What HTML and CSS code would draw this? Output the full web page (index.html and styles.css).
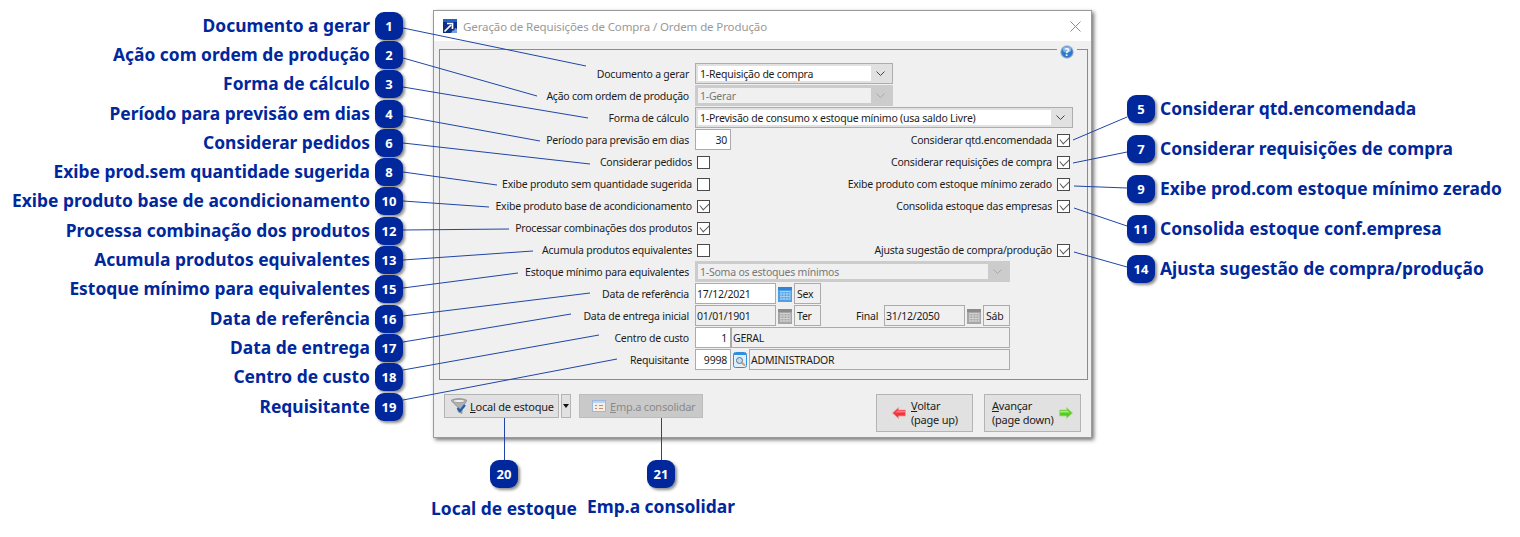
FILE: index.html
```html
<!DOCTYPE html>
<html lang="pt">
<head>
<meta charset="utf-8">
<title>Geração de Requisições de Compra</title>
<link rel="stylesheet" href="styles.css">
</head>
<body>
<div class="canvas">

  <section class="window">
    <header class="titlebar">
      <svg class="app-icon" viewBox="0 0 14 14" width="14" height="14"><rect width="14" height="14" fill="#0f2f86"/><rect width="14" height="3" fill="#1d62c8"/><path d="M1.500 12.500 8 6M4 4.500h5.500V10" stroke="#fff" stroke-width="1.700" fill="none"/><path d="M8 14l2-3 1 1 1-3 2 1v4z" fill="#7ba3d8"/></svg>
      <span class="title">Geração de Requisições de Compra / Ordem de Produção</span>
      <svg class="close" viewBox="0 0 11 11" width="11" height="11"><path d="M.5.5l10 10M10.500.5l-10 10" stroke="#8a8a8a" fill="none"/></svg>
    </header>

    <div class="group">
      <span class="help"><svg viewBox="0 0 14 14" width="14" height="14"><circle cx="7" cy="7" r="6.800" fill="#aebccb"/><circle cx="7" cy="7" r="5.800" fill="#2f78cc"/><ellipse cx="7" cy="4.500" rx="4.300" ry="3" fill="#7db3ea"/><text x="7" y="10.500" class="help-mark">?</text></svg></span>

      <div class="row"><span class="lbl">Documento a gerar</span>
        <div class="combo w198"><span class="combo-text">1-Requisição de compra</span><span class="combo-btn"><svg viewBox="0 0 9 5" width="9" height="5"><path d="M.5.500l4 4 4-4" stroke="#444" fill="none"/></svg></span></div></div>

      <div class="row"><span class="lbl">Ação com ordem de produção</span>
        <div class="combo w198 off"><span class="combo-text">1-Gerar</span><span class="combo-btn"><svg viewBox="0 0 9 5" width="9" height="5"><path d="M.5.500l4 4 4-4" stroke="#a8a8a8" fill="none"/></svg></span></div></div>

      <div class="row"><span class="lbl">Forma de cálculo</span>
        <div class="combo w378"><span class="combo-text">1-Previsão de consumo x estoque mínimo (usa saldo Livre)</span><span class="combo-btn"><svg viewBox="0 0 9 5" width="9" height="5"><path d="M.5.500l4 4 4-4" stroke="#444" fill="none"/></svg></span></div></div>

      <div class="row"><span class="lbl">Período para previsão em dias</span>
        <span class="field num">30</span>
        <span class="right"><span class="lbl-r">Considerar qtd.encomendada</span><span class="check on"></span></span></div>

      <div class="row"><span class="lbl chk">Considerar pedidos</span><span class="check"></span>
        <span class="right"><span class="lbl-r">Considerar requisições de compra</span><span class="check on"></span></span></div>

      <div class="row"><span class="lbl chk">Exibe produto sem quantidade sugerida</span><span class="check"></span>
        <span class="right"><span class="lbl-r">Exibe produto com estoque mínimo zerado</span><span class="check on"></span></span></div>

      <div class="row"><span class="lbl chk">Exibe produto base de acondicionamento</span><span class="check on"></span>
        <span class="right"><span class="lbl-r">Consolida estoque das empresas</span><span class="check on"></span></span></div>

      <div class="row"><span class="lbl chk">Processar combinações dos produtos</span><span class="check on"></span></div>

      <div class="row"><span class="lbl chk">Acumula produtos equivalentes</span><span class="check"></span>
        <span class="right"><span class="lbl-r">Ajusta sugestão de compra/produção</span><span class="check on"></span></span></div>

      <div class="row"><span class="lbl">Estoque mínimo para equivalentes</span>
        <div class="combo w315 off"><span class="combo-text">1-Soma os estoques mínimos</span><span class="combo-btn"><svg viewBox="0 0 9 5" width="9" height="5"><path d="M.5.500l4 4 4-4" stroke="#a8a8a8" fill="none"/></svg></span></div></div>

      <div class="row"><span class="lbl">Data de referência</span>
        <span class="field date white">17/12/2021</span>
        <svg class="cal" viewBox="0 0 14 16" width="14" height="16"><rect y="1" width="14" height="15" fill="#4f9fe6"/><rect y="1" width="14" height="3" fill="#2f86d8"/><path d="M2 5.500h10M2 8h10M2 10.500h10M2 13h10M3 5v9M6 5v9M9 5v9M12 5v9" stroke="#a9d2f5" stroke-width=".9"/></svg>
        <span class="day">Sex</span></div>

      <div class="row"><span class="lbl">Data de entrega inicial</span>
        <span class="field date">01/01/1901</span>
        <svg class="cal" viewBox="0 0 14 16" width="14" height="16"><rect y="1" width="14" height="15" fill="#a6a6a6"/><rect y="1" width="14" height="3" fill="#8c8c8c"/><path d="M2 5.500h10M2 8h10M2 10.500h10M2 13h10M3 5v9M6 5v9M9 5v9M12 5v9" stroke="#d6d6d6" stroke-width=".9"/></svg>
        <span class="day">Ter</span>
        <span class="final">Final</span>
        <span class="field date">31/12/2050</span>
        <svg class="cal" viewBox="0 0 14 16" width="14" height="16"><rect y="1" width="14" height="15" fill="#a6a6a6"/><rect y="1" width="14" height="3" fill="#8c8c8c"/><path d="M2 5.500h10M2 8h10M2 10.500h10M2 13h10M3 5v9M6 5v9M9 5v9M12 5v9" stroke="#d6d6d6" stroke-width=".9"/></svg>
        <span class="day">Sáb</span></div>

      <div class="row"><span class="lbl">Centro de custo</span>
        <span class="field num">1</span>
        <span class="field desc w279">GERAL</span></div>

      <div class="row"><span class="lbl">Requisitante</span>
        <span class="field num">9998</span>
        <svg class="lookup" viewBox="0 0 14 16" width="14" height="16"><rect x=".5" y=".5" width="13" height="15" rx="2" fill="#dff0fc" stroke="#2f8fdc"/><rect x="1" y="1" width="12" height="2" fill="#2f8fdc"/><circle cx="6.500" cy="8.500" r="3" fill="#c4def4" stroke="#56728e"/><path d="M8.500 10.500l3.500 3" stroke="#d89a6b" stroke-width="2"/></svg>
        <span class="field desc w261">ADMINISTRADOR</span></div>
    </div>

    <footer class="footer">
      <button class="btn local" type="button">
        <svg viewBox="0 0 16 16" width="16" height="16"><path d="M0 2.500c3-2.500 13-2.500 16 0l-5 7v6l-4-2v-4z" fill="#b0b0b0" stroke="#777" stroke-width=".6"/><ellipse cx="8" cy="3" rx="6" ry="1.500" fill="#f2f2f2" stroke="#888" stroke-width=".6"/><path d="M6.500 10l2.500 3 5-6" stroke="#1f5fb0" stroke-width="2.200" fill="none"/></svg>
        <span><u>L</u>ocal de estoque</span>
      </button>
      <button class="btn drop" type="button"><i class="caret"></i></button>
      <button class="btn emp" type="button">
        <svg viewBox="0 0 14 12" width="14" height="12"><rect x=".5" y=".5" width="13" height="11" fill="#f4efe2" stroke="#9db8dc"/><rect x="1" y="1" width="12" height="2" fill="#bcd2ee"/><path d="M3 5.500h2M7 5.500h4M3 8.500h2M7 8.500h4" stroke="#c08a7a"/></svg>
        <span><u>E</u>mp.a consolidar</span>
      </button>
      <button class="btn nav back" type="button">
        <svg viewBox="0 0 14 12" width="14" height="12"><path d="M.5 6 6.500.5V3H13.500V9H6.500V11.500z" fill="#f2343c" stroke="#e8a0a0" stroke-width=".8"/><path d="M3 6 6.500 2.500V4H13V5.500H5z" fill="#ff7a80"/></svg>
        <span class="nav-text"><u>V</u>oltar<br>(page up)</span>
      </button>
      <button class="btn nav next" type="button">
        <span class="nav-text"><u>A</u>vançar<br>(page down)</span>
        <svg viewBox="0 0 14 12" width="14" height="12"><path d="M13.500 6 7.500.5V3H.5V9H7.500V11.500z" fill="#55cc22" stroke="#a8d890" stroke-width=".8"/><path d="M11 6 7.500 2.500V4H1V5.500H9z" fill="#a0ee70"/></svg>
      </button>
    </footer>
  </section>

  <svg class="leaders" viewBox="0 0 1520 537" width="1520" height="537">
    <g stroke="#1f45a5" fill="none">
      <path d="M403 28 586 66M403 58 537 96M403 87 588 118M403 116 540 141M403 143 590 164M403 172 497 185M403 201 489 207M403 230 509 229M403 260 533 251M403 288 518 273M403 316 590 293M403 342 571 314M403 370 599 335M403 400 617 359"/>
      <path d="M1127 117 1073 140M1127 152 1073 163M1127 188 1074 186M1127 226 1074 208M1127 267 1074 252"/>
      <path d="M504.500 418V460M661.500 418V460"/>
    </g>
  </svg>

  <ol class="callouts left">
    <li><span>Documento a gerar</span><b>1</b></li>
    <li><span>Ação com ordem de produção</span><b>2</b></li>
    <li><span>Forma de cálculo</span><b>3</b></li>
    <li><span>Período para previsão em dias</span><b>4</b></li>
    <li><span>Considerar pedidos</span><b>6</b></li>
    <li><span>Exibe prod.sem quantidade sugerida</span><b>8</b></li>
    <li><span>Exibe produto base de acondicionamento</span><b>10</b></li>
    <li><span>Processa combinação dos produtos</span><b>12</b></li>
    <li><span>Acumula produtos equivalentes</span><b>13</b></li>
    <li><span>Estoque mínimo para equivalentes</span><b>15</b></li>
    <li><span>Data de referência</span><b>16</b></li>
    <li><span>Data de entrega</span><b>17</b></li>
    <li><span>Centro de custo</span><b>18</b></li>
    <li><span>Requisitante</span><b>19</b></li>
  </ol>

  <ol class="callouts right-side">
    <li><b>5</b><span>Considerar qtd.encomendada</span></li>
    <li><b>7</b><span>Considerar requisições de compra</span></li>
    <li><b>9</b><span>Exibe prod.com estoque mínimo zerado</span></li>
    <li><b>11</b><span>Consolida estoque conf.empresa</span></li>
    <li><b>14</b><span>Ajusta sugestão de compra/produção</span></li>
  </ol>

  <div class="pin pin20"><b>20</b><span>Local de estoque</span></div>
  <div class="pin pin21"><b>21</b><span>Emp.a consolidar</span></div>
</div>
</body>
</html>
```
FILE: styles.css
```css
* { box-sizing: border-box; }
html, body { margin: 0; padding: 0; background: #fff; }
.canvas {
  position: relative;
  width: 1520px;
  height: 537px;
  overflow: hidden;
  font-family: "Noto Sans", "DejaVu Sans", sans-serif;
}

/* dialog */
.window {
  position: absolute;
  left: 433px;
  top: 10px;
  width: 659px;
  height: 428px;
  display: flex;
  flex-direction: column;
  background: #f0f0f0;
  border: 1px solid #9a9a9a;
  box-shadow: 2px 2px 4px rgba(0,0,0,.55);
  font-size: 10.500px;
  color: #1c1c1c;
  letter-spacing: -.22px;
}
.titlebar {
  height: 30px;
  flex: none;
  display: flex;
  align-items: center;
  padding: 0 9px;
  background: #fff;
}
.app-icon { margin-right: 6px; }
.title { font-size: 11.500px; color: #999; letter-spacing: -.11px; }
.close { margin-left: auto; margin-right: 1px; }

.group {
  position: relative;
  width: 649px;
  height: 331px;
  flex: none;
  margin: 8px 0 0 5px;
  padding-top: 13px;
  border: 1px solid #8c8c8c;
}
.help {
  position: absolute;
  right: 10px;
  top: -5px;
  width: 20px;
  height: 14px;
  display: flex;
  justify-content: center;
  background: #f0f0f0;
}
.help-mark {
  font-size: 10px;
  font-weight: 700;
  fill: #fff;
  text-anchor: middle;
  letter-spacing: 0;
}
.row {
  display: flex;
  align-items: flex-start;
  height: 22px;
  line-height: 23px;
  white-space: nowrap;
}
.lbl { width: 249px; text-align: right; margin-right: 6px; flex: none; }
.lbl.chk { width: 252px; margin-right: 5px; }
.right { margin-left: auto; margin-right: 17px; display: flex; align-items: flex-start; }
.lbl-r { margin-right: 5px; }
.check {
  width: 13px;
  height: 13px;
  margin-top: 5px;
  flex: none;
  border: 1px solid #4a4a4a;
  background: #fff;
  position: relative;
}
.check.on::after {
  content: "";
  position: absolute;
  left: 2px;
  top: 1px;
  width: 8px;
  height: 5px;
  border-left: 1px solid #555;
  border-bottom: 1px solid #555;
  transform: rotate(-45deg) skew(-6deg);
}

.combo {
  height: 21px;
  flex: none;
  display: flex;
  border: 1px solid #adadad;
  background: #e1e1e1;
  padding: 2px;
}
.combo-text { flex: 1; background: #fff; padding-left: 2px; line-height: 17px; overflow: hidden; }
.combo-btn { width: 19px; flex: none; display: flex; align-items: center; justify-content: center; }
.combo.off { background: #ccc; border-color: #ccc; color: #777; }
.combo.off .combo-text { background: #f0f0f0; }
.w198 { width: 198px; }
.w378 { width: 378px; }
.w315 { width: 315px; }

.field {
  height: 21px;
  flex: none;
  border: 1px solid #ababab;
  line-height: 20px;
  padding: 0 1px;
}
.num { width: 36px; background: #fff; text-align: right; padding-right: 3px; }
.date { width: 81px; margin-right: 2px; }
.white { background: #fff; }
.desc { background: #f0f0f0; }
.w279 { width: 279px; }
.w261 { width: 261px; margin-left: 2px; }
.cal { flex: none; margin: 3px 2px 0 0; }
.lookup { flex: none; margin: 3px 0 0 2px; }
.day {
  width: 27px;
  height: 21px;
  flex: none;
  border: 1px solid #ababab;
  line-height: 20px;
  padding-left: 2px;
}
.final { width: 28px; margin-left: 35px; flex: none; }

/* footer */
.footer { flex: none; display: flex; align-items: flex-start; padding: 14px 0 0 10px; }
.btn {
  height: 24px;
  padding: 0;
  display: flex;
  align-items: center;
  border: 1px solid #b4b4b4;
  background: #e1e1e1;
  font: inherit;
  color: #1c1c1c;
  letter-spacing: inherit;
  white-space: nowrap;
}
.local { width: 115px; padding-left: 6px; gap: 3px; font-size: 11px; }
.drop { width: 10px; margin-left: 2px; justify-content: center; }
.caret { border: 3px solid transparent; border-top: 4px solid #111; border-bottom: 0; }
.emp { width: 124px; margin-left: 8px; padding-left: 12px; gap: 4px; background: #c9c9c9; border-color: #bdbdbd; color: #8a8a8a; font-size: 11px; }
.nav { width: 97px; height: 38px; line-height: 14px; text-align: left; gap: 5px; font-size: 11px; }
.nav-text { display: block; }
.back { margin-left: auto; padding-left: 15px; }
.next { margin-left: 11px; margin-right: 10px; padding-left: 7px; }

/* callouts */
.leaders { position: absolute; left: 0; top: 0; pointer-events: none; }
.callouts {
  position: absolute;
  margin: 0;
  padding: 0;
  list-style: none;
  display: flex;
  flex-direction: column;
  font-size: 17.400px;
  font-weight: 700;
  color: #00289c;
}
.callouts li { display: flex; align-items: center; gap: 5px; white-space: nowrap; }
.callouts span { padding-bottom: 2px; }
.left { left: 0; top: 11px; width: 403px; }
.left li { justify-content: flex-end; height: 29.300px; }
.right-side { left: 1127px; top: 89px; }
.right-side li { height: 40px; }
.callouts b, .pin b {
  width: 28px;
  height: 28px;
  flex: none;
  display: flex;
  align-items: center;
  justify-content: center;
  border-radius: 9px;
  background: #00289c;
  color: #fff;
  font-size: 13px;
  font-weight: 700;
  box-shadow: 2px 2px 3px rgba(0,0,0,.45);
}
.pin {
  position: absolute;
  top: 460px;
  display: flex;
  flex-direction: column;
  align-items: center;
  font-size: 17.400px;
  font-weight: 700;
  color: #00289c;
  white-space: nowrap;
}
.pin20 { left: 404px; width: 200px; gap: 8px; }
.pin21 { left: 561px; width: 200px; gap: 6px; }
```
